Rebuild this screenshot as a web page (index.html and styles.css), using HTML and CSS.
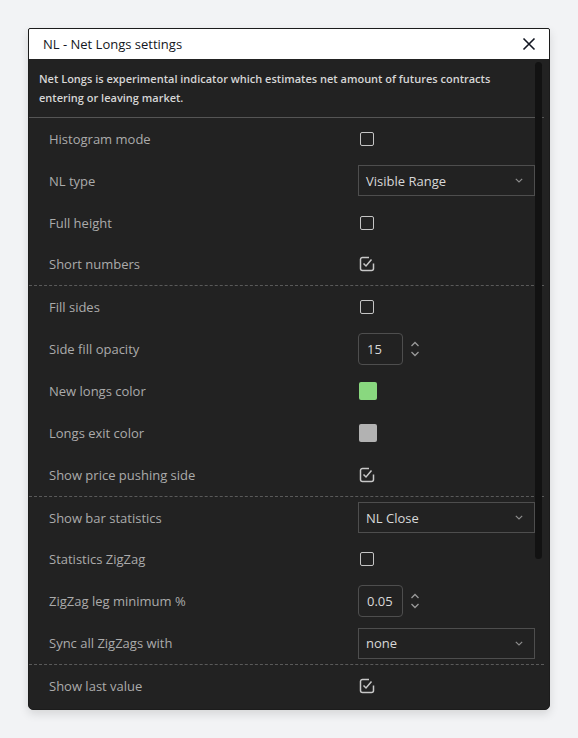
FILE: index.html
```html
<!DOCTYPE html>
<html>
<head>
<meta charset="utf-8">
<link rel="stylesheet" href="styles.css">
</head>
<body>
<div class="dialog">
  <div class="header">
    <span class="title">NL - Net Longs settings</span>
    <svg class="close" width="14" height="14" viewBox="0 0 14 14"><path d="M1.5 1.5 L12.5 12.5 M12.5 1.5 L1.5 12.5" stroke="#131722" stroke-width="1.6" fill="none"/></svg>
  </div>
  <div class="body">
    <div class="scroll-thumb"></div>
    <div class="content">
      <p class="desc">Net Longs is experimental indicator which estimates net amount of futures contracts entering or leaving market.</p>
      <div class="group">
        <div class="row"><span class="label">Histogram mode</span><span class="cb"></span></div>
        <div class="row"><span class="label">NL type</span><div class="select"><span>Visible Range</span><svg width="8" height="5" viewBox="0 0 8 5"><path d="M0.8 0.8 L4 4 L7.2 0.8" stroke="#8a8a8a" stroke-width="1.2" fill="none"/></svg></div></div>
        <div class="row"><span class="label">Full height</span><span class="cb"></span></div>
        <div class="row"><span class="label">Short numbers</span><svg class="cbc" width="16" height="16" viewBox="0 0 16 16"><path d="M10 1.5 H3.5 A2 2 0 0 0 1.5 3.5 V12.5 A2 2 0 0 0 3.5 14.5 H12.5 A2 2 0 0 0 14.5 12.5 V7.5" stroke="#c8c8c8" stroke-width="1.5" fill="none"/><path d="M4.5 7.5 L7 10 L12.5 3.5" stroke="#c8c8c8" stroke-width="1.5" fill="none"/></svg></div>
      </div>
      <div class="group">
        <div class="row"><span class="label">Fill sides</span><span class="cb"></span></div>
        <div class="row"><span class="label">Side fill opacity</span><div class="num"><span class="numbox">15</span><svg class="spin" width="10" height="20" viewBox="0 0 10 20"><path d="M1.5 7 L5 3.5 L8.5 7 M1.5 13 L5 16.5 L8.5 13" stroke="#9a9a9a" stroke-width="1.3" fill="none"/></svg></div></div>
        <div class="row"><span class="label">New longs color</span><span class="swatch green"></span></div>
        <div class="row"><span class="label">Longs exit color</span><span class="swatch gray"></span></div>
        <div class="row"><span class="label">Show price pushing side</span><svg class="cbc" width="16" height="16" viewBox="0 0 16 16"><path d="M10 1.5 H3.5 A2 2 0 0 0 1.5 3.5 V12.5 A2 2 0 0 0 3.5 14.5 H12.5 A2 2 0 0 0 14.5 12.5 V7.5" stroke="#c8c8c8" stroke-width="1.5" fill="none"/><path d="M4.5 7.5 L7 10 L12.5 3.5" stroke="#c8c8c8" stroke-width="1.5" fill="none"/></svg></div>
      </div>
      <div class="group">
        <div class="row"><span class="label">Show bar statistics</span><div class="select"><span>NL Close</span><svg width="8" height="5" viewBox="0 0 8 5"><path d="M0.8 0.8 L4 4 L7.2 0.8" stroke="#8a8a8a" stroke-width="1.2" fill="none"/></svg></div></div>
        <div class="row"><span class="label">Statistics ZigZag</span><span class="cb"></span></div>
        <div class="row"><span class="label">ZigZag leg minimum %</span><div class="num"><span class="numbox">0.05</span><svg class="spin" width="10" height="20" viewBox="0 0 10 20"><path d="M1.5 7 L5 3.5 L8.5 7 M1.5 13 L5 16.5 L8.5 13" stroke="#9a9a9a" stroke-width="1.3" fill="none"/></svg></div></div>
        <div class="row"><span class="label">Sync all ZigZags with</span><div class="select"><span>none</span><svg width="8" height="5" viewBox="0 0 8 5"><path d="M0.8 0.8 L4 4 L7.2 0.8" stroke="#8a8a8a" stroke-width="1.2" fill="none"/></svg></div></div>
      </div>
      <div class="group last">
        <div class="row"><span class="label">Show last value</span><svg class="cbc" width="16" height="16" viewBox="0 0 16 16"><path d="M10 1.5 H3.5 A2 2 0 0 0 1.5 3.5 V12.5 A2 2 0 0 0 3.5 14.5 H12.5 A2 2 0 0 0 14.5 12.5 V7.5" stroke="#c8c8c8" stroke-width="1.5" fill="none"/><path d="M4.5 7.5 L7 10 L12.5 3.5" stroke="#c8c8c8" stroke-width="1.5" fill="none"/></svg></div>
      </div>
    </div>
  </div>
</div>
</body>
</html>
```

FILE: styles.css
```css
* { box-sizing: border-box; }
html, body { margin: 0; padding: 0; }
body {
  background: #f2f3f5;
  font-family: "Open Sans", "Liberation Sans", sans-serif;
  padding: 28px 0 0 28px;
  width: 578px;
  height: 738px;
}
.dialog {
  width: 522px;
  height: 682px;
  border: 1px solid #1c1c1c;
  border-radius: 2px 2px 5px 5px;
  overflow: hidden;
  background: #222222;
  box-shadow: 0 4px 10px rgba(0,0,0,0.12);
  display: flex;
  flex-direction: column;
}
.header {
  height: 30px;
  background: #ffffff;
  display: flex;
  align-items: center;
  justify-content: space-between;
  padding: 0 13px 0 14px;
  flex: none;
}
.title {
  font-size: 13px;
  color: #131722;
}
.close { display: block; }
.body {
  position: relative;
  flex: 1;
  overflow: hidden;
}
.scroll-thumb {
  position: absolute;
  left: 506px;
  top: 3px;
  width: 7px;
  height: 497px;
  background: #121212;
  border-radius: 4px;
}
.content {
  width: 515px;
}
.desc {
  margin: 0;
  padding: 10px 42px 10px 10px;
  font-size: 11px;
  font-weight: 600;
  line-height: 19px;
  color: #d6d6d6;
  border-bottom: 1px solid #555555;
}
.group {
  border-bottom: 1px dashed #5a5a5a;
}
.group.last { border-bottom: none; }
.row {
  height: 41.85px;
  display: grid;
  grid-template-columns: 309px 1fr;
  align-items: center;
  padding-left: 20px;
}
.label {
  font-size: 13px;
  color: #ababab;
}
.cb {
  display: block;
  width: 14px;
  height: 14px;
  margin-left: 2px;
  border: 1.5px solid #c4c4c4;
  border-radius: 2px;
}
.cbc { display: block; margin-left: 1px; }
.select {
  width: 177px;
  height: 31px;
  border: 1px solid #4e4e4e;
  display: flex;
  align-items: center;
  justify-content: space-between;
  padding: 0 11px 0 7px;
  font-size: 13px;
  color: #d8d8d8;
}
.select svg { display: block; }
.num {
  display: flex;
  align-items: center;
}
.numbox {
  width: 45px;
  height: 32px;
  border: 1px solid #4e4e4e;
  border-radius: 4px;
  display: flex;
  align-items: center;
  padding-left: 8px;
  font-size: 13px;
  color: #d8d8d8;
}
.spin { display: block; margin-left: 7px; }
.swatch {
  display: block;
  width: 18px;
  height: 18px;
  border-radius: 2px;
  margin-left: 1px;
}
.swatch.green { background: #89d87f; }
.swatch.gray { background: #b2b2b2; }
```
